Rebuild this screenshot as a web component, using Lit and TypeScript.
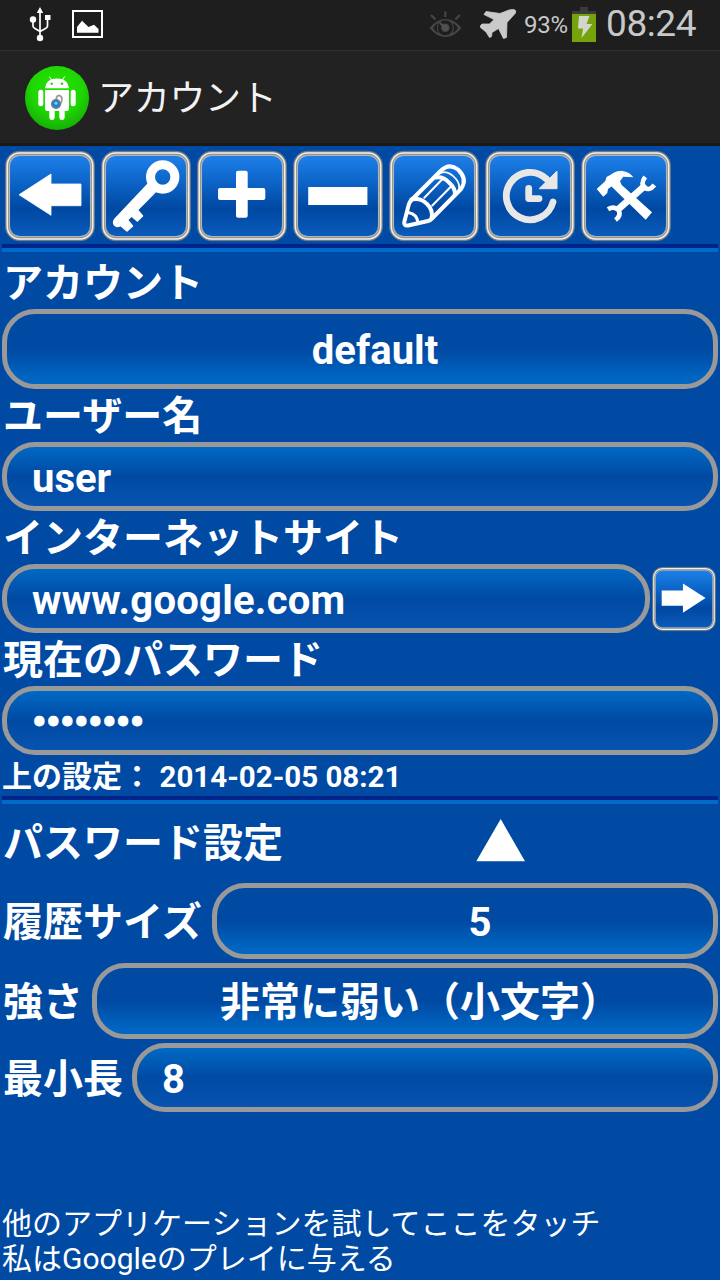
import { LitElement, html, svg, css } from "lit";
import { customElement, property } from "lit/decorators.js";

const glyphs: Record<string, unknown> = {
  back: svg`<path fill="#fff" d="M17 46.7 49 26V36H79V57.7H49V67.3Z" stroke="#fff" stroke-width=".8" stroke-linejoin="round"/>`,
  forward: svg`<path fill="#fff" d="M78.500 46.700 46.500 26V36H16.500V57.700H46.500V67.300Z"/>`,
  key: svg`<circle cx="64.700" cy="29" r="12.200" fill="none" stroke="#fff" stroke-width="9"/>
    <path fill="#fff" stroke="#fff" stroke-width="1.500" stroke-linejoin="round" d="M50 36 17 71Q14.500 74 16.500 77 18.500 79.500 22.500 77.500L29 83 34.500 78 29.500 72 33.500 68 39.300 73 44.500 68 39.500 62 57 44.300Z"/>`,
  plus: svg`<path fill="#fff" d="M44 22.700h7.700q2 0 2 2V40h15.600q2 0 2 2v8q0 2-2 2H53.700v15.700q0 2-2 2H44q-2 0-2-2V52H26q-2 0-2-2v-8q0-2 2-2H42V24.700q0-2 2-2Z"/>`,
  minus: svg`<path fill="#fff" d="M18.200 39H77.400V57H18.200Z"/>`,
  pencil: svg`<g fill="none" stroke="#fff" stroke-width="4" stroke-linejoin="round" stroke-linecap="round">
      <path d="M18.300 74 22.800 56.500Q23.500 54 25.500 52L54 23.500Q63 14.500 72 21.500 82 31 75 41L46.500 70Q44.500 72.500 42 73L22 77.500Q17.500 78 18.300 74Z"/>
      <path d="M25.300 51.500Q35 49.500 41 56 47.500 62 45.500 70.500"/>
      <path d="M49.500 29.500Q57 28 63 34.500 69.500 40 68.800 46.500"/>
      <path d="M22 64.500Q31 66 32 74.500" stroke-width="3"/>
      <path d="M38.300 49.700 56.500 31M46.300 57.500 65.500 38" stroke-width="2"/></g>
      <path d="M52.500 26Q61 20.500 70 31 74 36 73 41" fill="none" stroke="#fff" stroke-width="1.800"/>`,
  history: svg`<g fill="none" stroke="#e8e8e8" stroke-width="6.800" stroke-linecap="round" stroke-linejoin="round">
      <path d="M71 54A23.700 23.700 0 1 1 64.500 31"/><path d="M46.700 40.300V50.600H57"/></g>
      <path fill="#e8e8e8" stroke="#e8e8e8" stroke-linejoin="round" d="M75 23V40.700H57Z"/>`,
  tools: svg`<path fill="#fff" d="M18.700 41 25.300 48.700 29.300 45 30 41 33.500 38.500 67.700 71.700 74 64.300 43.700 37 42 33.300 45.300 28.700 55.300 29.300Q52 24 43.700 22.700 38 23 35.300 25L31.300 27.500 28.500 29 27.300 33Z"/>
      <path d="M40 61.500 66 38.500" stroke="#fff" stroke-width="7"/>
      <g fill="none" stroke="#fff" stroke-width="4.600"><path d="M67.200 28.800Q62 36 67 39.500 71 43.500 76.400 37"/>
      <path d="M30 61.300Q36 57.500 40.500 62 43.500 67.500 37.500 72"/></g>`,
};

@customElement("tool-button")
class ToolButton extends LitElement {
  @property() icon = "back";
  static styles = css`
    :host { display: block; width: 96px; height: 96px; flex: none; }
    svg { display: block; width: 100%; height: 100%; }
  `;
  render() {
    return html`<svg viewBox="0 0 96 96">
      <defs>
        <linearGradient id="face" x1="0" y1="0" x2="0" y2="1">
          <stop offset="0" stop-color="#1e80e8"/><stop offset=".25" stop-color="#106bd0"/>
          <stop offset=".66" stop-color="#0048a2"/><stop offset="1" stop-color="#0a5cbc"/>
        </linearGradient>
      </defs>
      <rect x="3.500" y="3.200" width="89" height="89.600" rx="14" fill="#8a8a8a" stroke="#6f7986" stroke-width=".8"/>
      <rect x="5.300" y="5.100" width="85.400" height="85.800" rx="12.500" fill="none" stroke="#f0f0ee" stroke-width="1.500"/>
      <rect x="7.400" y="7.300" width="81.200" height="81.400" rx="10.500" fill="url(#face)" stroke="#b4b4b2" stroke-width="1.300"/>
      ${glyphs[this.icon]}
    </svg>`;
  }
}

@customElement("app-root")
class AppRoot extends LitElement {
  static styles = css`
    :host {
      display: flex; flex-direction: column; width: 720px; height: 1280px; overflow: hidden;
      background: #004aa3; color: #fff;
      font-family: Roboto, "Noto Sans CJK JP", sans-serif;
    }
    * { box-sizing: border-box; }
    svg { display: block; flex: none; }
    .status { height: 51px; flex: none; display: flex; align-items: flex-start; background: #1e1e1e;
      border-bottom: 1px solid #303030; padding: 6px 0 0 28px; color: #c8c8c8; }
    .picture { margin: 4px 0 0 20px; }
    .eye { margin: 4px 0 0 auto; }
    .plane { margin: 2px 0 0 17px; }
    .percent { font-size: 24px; line-height: 28px; margin: 5px 0 0 7px; width: 48px; white-space: nowrap; letter-spacing: -0.2px; }
    .battery { margin-top: 1px; }
    .clock { font-size: 37px; line-height: 44px; margin: -4px 0 0 10px; width: 114px; letter-spacing: -0.4px; }
    .title { height: 95px; flex: none; display: flex; align-items: center; padding: 2px 0 0 25px; gap: 9px;
      background: #222; border-bottom: 3px solid #191919; color: #f3f3f3; font-size: 36px; line-height: 90px; }
    .title span { letter-spacing: -0.3px; padding-top: 1px; }
    .tools { display: flex; height: 98px; flex: none; padding: 2px 0 0 2px; }
    .rule { height: 8px; flex: none; margin: 0 2px; background: linear-gradient(#00248a 50%, #006aca 50%); }
    .label { font-size: 40px; font-weight: 700; height: 53px; line-height: 56px; padding-left: 3px; flex: none; white-space: nowrap; }
    .label.first { height: 57px; line-height: 64px; }
    .field, .picker { height: 69px; flex: 1 1 0; border: 5px solid #999; border-radius: 33px; padding-left: 25px;
      font-size: 40px; font-weight: 700; line-height: 64px; white-space: nowrap;
      background: linear-gradient(#0069c4, #004aa3 50%, #0753b0) padding-box; }
    .picker { height: 76px; text-align: center; line-height: 70px; padding-left: 30px;
      background: linear-gradient(#004aa3, #004aa3 50%, #0067c3 94%) padding-box; }
    .picker.tall { height: 80px; line-height: 74px; }
    .row { display: flex; flex: none; align-items: center; padding: 0 2px; }
    .row tool-button { width: 68px; height: 68px; }
    .site { letter-spacing: 0.25px; }
    .dots { letter-spacing: -0.4px; -webkit-text-stroke: 1px #fff; }
    .stamp { font-size: 30px; font-weight: 700; height: 41px; line-height: 43px; padding-left: 2px; flex: none; white-space: pre; }
    .stamp .date { font-size: 29.5px; }
    .section { display: flex; align-items: flex-start; height: 79px; flex: none; }
    .section .label { width: 476px; height: 79px; line-height: 79px; }
    .arrow { margin-top: 15px; }
    .setting { margin-bottom: 4px; }
    .setting .label { height: 69px; line-height: 71px; padding-left: 1px; }
    .history .label { width: 210px; }
    .strength .label { width: 90px; }
    .minimum .label { width: 130px; line-height: 73px; }
    .promo { margin-top: auto; padding: 0 0 4px 2px; font-size: 30px; line-height: 35px; white-space: nowrap; }
  `;

  private statusBar() {
    return html`<div class="status">
      <svg width="24" height="36" viewBox="0 0 24 36">
        <g fill="none" stroke="#fff" stroke-width="1.700"><path d="M12 6V32M5 14v6q0 1.500 2 2.500l5 3M19.500 12v8q0 1.500-2 2.500l-5.500 3"/></g>
        <path fill="#fff" d="M12 1 15.200 7H8.800ZM17 9h5.500v5H17Z"/><circle cx="5" cy="13.500" r="3.200" fill="#fff"/><circle cx="12" cy="32" r="3.200" fill="#fff"/>
      </svg>
      <svg class="picture" width="31" height="28" viewBox="0 0 31 28">
        <path fill="none" stroke="#fff" stroke-width="2" d="M1 1H30V27H1Z"/>
        <path fill="#fff" d="M5 22.800V17L10 10.800 16.500 17 22 14.800 26.500 19V22.800Z"/>
      </svg>
      <svg class="eye" width="33" height="28" viewBox="0 0 33 28">
        <path d="M.5 18Q8 9 16.500 9 25 9 32.500 18 25 27 16.500 27 8 27 .5 18Z" fill="#464646"/>
        <path d="M16.300 1.500V7M2 5 6.500 9.500M30.800 5 26.300 9.500" stroke="#464646" stroke-width="2.200"/>
        <path fill="#1e1e1e" d="M4 18Q6.500 14 9.500 12.800 7.500 18 9.500 23.200 6.500 22 4 18ZM29 18Q26.500 14 23.500 12.800 25.500 18 23.500 23.200 26.500 22 29 18Z"/>
        <circle cx="16.300" cy="17.800" r="6.200" fill="none" stroke="#1e1e1e" stroke-width="3.800"/>
        <circle cx="16.300" cy="17.800" r="8" fill="none" stroke="#464646" stroke-width="1"/>
        <circle cx="16.300" cy="17.800" r="3" fill="#505050"/><path d="M11 13 16 17.500" stroke="#505050" stroke-width="2.200"/>
      </svg>
      <svg class="plane" width="38" height="32" viewBox="0 0 38 32">
        <path fill="#cacaca" stroke="#cacaca" stroke-width=".8" stroke-linejoin="round" d="M1.500 17.500 3 16 10.500 16 15 11.500 5 6.500 7 3.500 21 5.500 30 2Q38 0 36.500 5L28 14.500 27.500 29.500 24.500 30.500 19.500 20.500 13 24.500 12.500 28.500 10.500 29.500 7 24 1.500 19.500Z"/>
      </svg>
      <span class="percent">93%</span>
      <svg class="battery" width="24" height="35" viewBox="0 0 24 35">
        <path fill="#3b3b3b" d="M8 0h8v4h8v3.500H0V4H8Z"/><path fill="#74a30b" d="M0 7H24V35H0Z"/>
        <path fill="#d2d6cc" d="M7 9H17.500L14.500 17H20.500L9.500 31 11 21.500H6Z"/>
      </svg>
      <span class="clock">08:24</span>
    </div>`;
  }

  private logo() {
    return html`<svg width="64" height="64" viewBox="25 66 64 64">
      <defs><radialGradient id="disc" cx=".5" cy=".35" r=".65"><stop offset="0" stop-color="#23e400"/><stop offset=".6" stop-color="#1fd603"/><stop offset="1" stop-color="#16b004"/></radialGradient></defs>
      <circle cx="57" cy="98" r="32" fill="url(#disc)"/>
      <g fill="#fff">
        <path d="M45 88.300Q46 78.500 57 78.500 68 78.500 69 88.300ZM45 90H69V108.500Q69 111 66.500 111H64.700V117.500Q64.500 120 62 120 59.500 120 59.300 117.500V111H54.700V117.500Q54.500 120 52 120 49.500 120 49.300 117.500V111H47.500Q45 111 45 108.500Z"/>
        <rect x="38.300" y="89.700" width="5" height="16.500" rx="2.500"/><rect x="70.700" y="89.700" width="5" height="16.500" rx="2.500"/>
        <path d="M49.300 76.500 51.500 80M64.700 76.500 62.500 80" stroke="#fff" stroke-width="1"/>
      </g>
      <circle cx="51.700" cy="83.700" r="1.200" fill="#1fd603"/><circle cx="62" cy="83.700" r="1.200" fill="#1fd603"/>
      <path d="M56 101 56.500 97.500Q58 94.500 60.500 96 62.700 97.500 61.500 101.500L60.500 104" fill="none" stroke="#9b9b9b" stroke-width="1.800"/>
      <circle cx="56" cy="104" r="4.300" fill="#1485dc" stroke="#77797c" stroke-width="1.600"/>
      <circle cx="56" cy="103.300" r="1.500" fill="#7cd2ff"/>
    </svg>`;
  }

  render() {
    return html`
      ${this.statusBar()}
      <div class="title">${this.logo()}<span>アカウント</span></div>
      <div class="tools">
        ${["back", "key", "plus", "minus", "pencil", "history", "tools"].map((i) => html`<tool-button icon=${i}></tool-button>`)}
      </div>
      <div class="rule"></div>
      <div class="label first">アカウント</div>
      <div class="row"><div class="picker tall">default</div></div>
      <div class="label">ユーザー名</div>
      <div class="row"><div class="field">user</div></div>
      <div class="label">インターネットサイト</div>
      <div class="row"><div class="field site">www.google.com</div><tool-button icon="forward"></tool-button></div>
      <div class="label">現在のパスワード</div>
      <div class="row"><div class="field dots">••••••••</div></div>
      <div class="stamp">上の設定： <span class="date">2014-02-05 08:21</span></div>
      <div class="rule"></div>
      <div class="section"><div class="label">パスワード設定</div>
        <svg class="arrow" width="50" height="43" viewBox="0 0 50 43"><path fill="#fff" d="M24.700 0 49 42.300H.3Z"/></svg>
      </div>
      <div class="row setting history"><div class="label">履歴サイズ</div><div class="picker">5</div></div>
      <div class="row setting strength"><div class="label">強さ</div><div class="picker">非常に弱い（小文字）</div></div>
      <div class="row setting minimum"><div class="label">最小長</div><div class="field">8</div></div>
      <div class="promo">他のアプリケーションを試してここをタッチ<br>私はGoogleのプレイに与える</div>
    `;
  }
}
